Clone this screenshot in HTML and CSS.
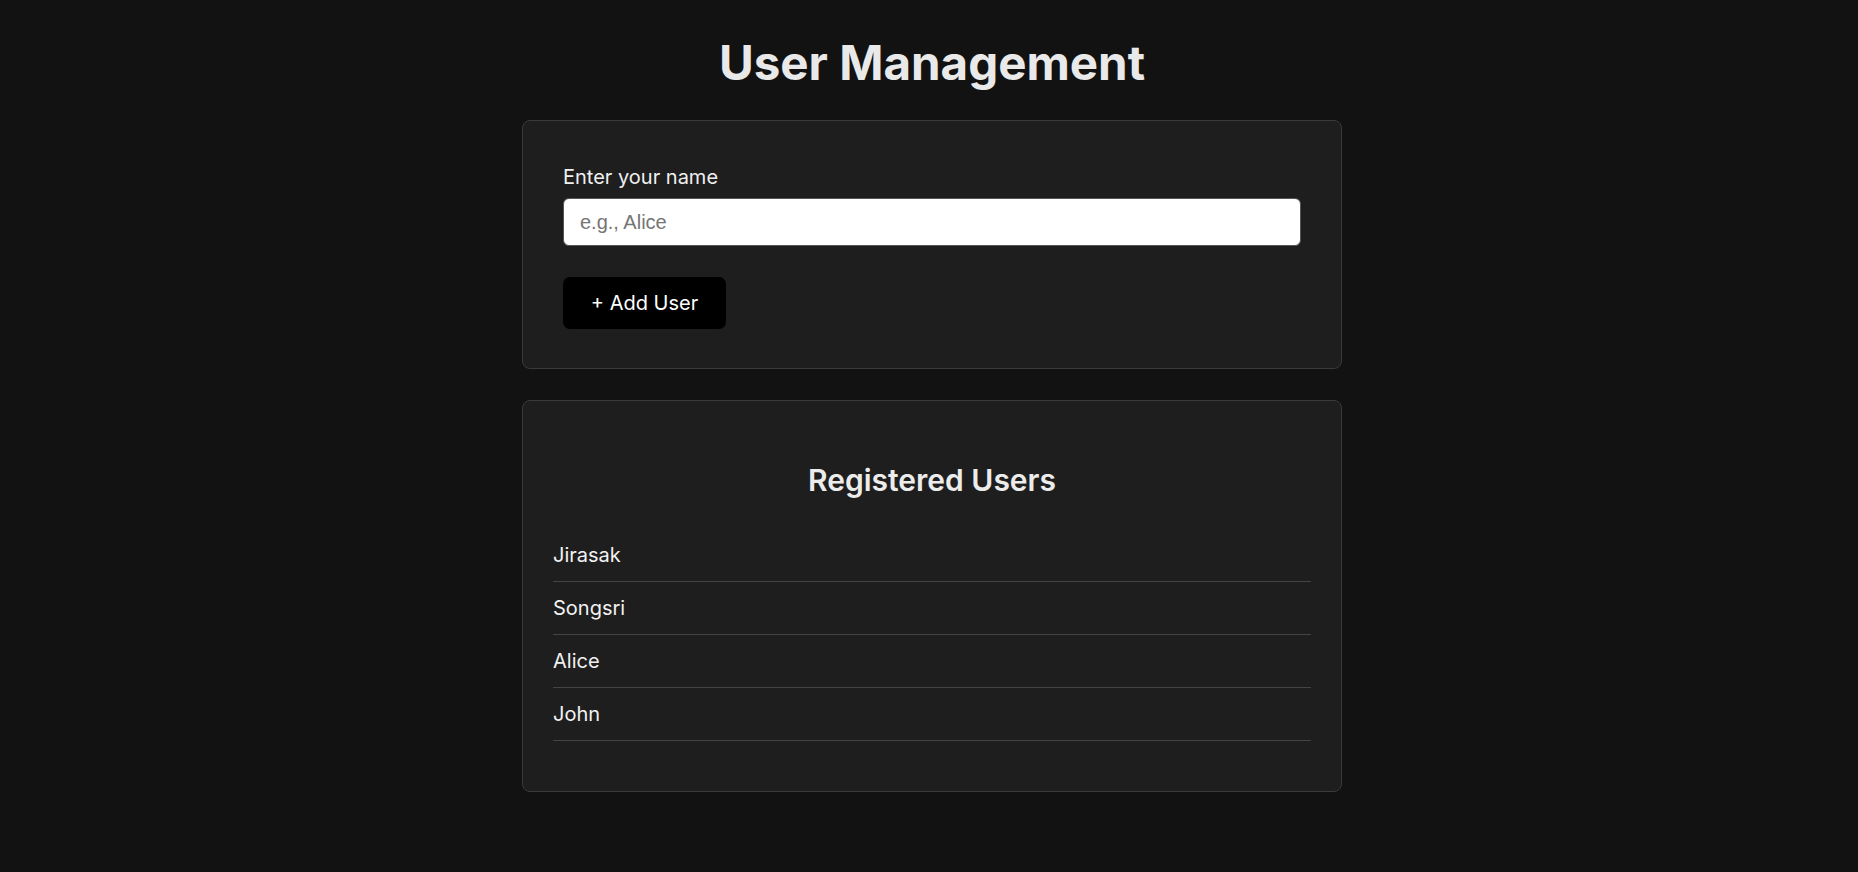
FILE: index.html
```html
<!DOCTYPE html>
<html lang="en">
<head>
<meta charset="utf-8">
<title>User Management</title>
<link rel="stylesheet" href="styles.css">
</head>
<body>
<main class="page">
  <h1 class="title">User Management</h1>
  <section class="card form-card">
    <label class="field-label" for="name">Enter your name</label>
    <input class="field-input" id="name" type="text" placeholder="e.g., Alice">
    <button class="add-btn" type="button">+ Add User</button>
  </section>
  <section class="card list-card">
    <h2 class="list-title">Registered Users</h2>
    <ul class="user-list">
      <li class="user-item">Jirasak</li>
      <li class="user-item">Songsri</li>
      <li class="user-item">Alice</li>
      <li class="user-item">John</li>
    </ul>
  </section>
</main>
</body>
</html>
```

FILE: styles.css
```css
* { box-sizing: border-box; }

html, body {
  margin: 0;
  padding: 0;
  background: #121212;
}

body {
  font-family: Inter, "Noto Sans", sans-serif;
  color: #f2f2f2;
}

.page {
  display: flex;
  flex-direction: column;
  align-items: center;
  padding: 34px 0 40px 6px;
}

.title {
  margin: 0 0 28px;
  font-size: 47.5px;
  font-weight: 700;
  line-height: 58px;
  color: #e9e9e9;
}

.card {
  width: 820px;
  background: #1e1e1e;
  border: 1px solid #3a3a3a;
  border-radius: 8px;
}

.form-card {
  display: flex;
  flex-direction: column;
  align-items: flex-start;
  padding: 40px 40px 39px;
  margin-bottom: 31px;
}

.field-label {
  display: block;
  font-size: 20px;
  line-height: 22px;
  margin: 5px 0 10px;
  color: #f0f0f0;
}

.field-input {
  width: 100%;
  height: 48px;
  padding: 0 16px;
  border: 1px solid #555;
  border-radius: 6px;
  background: #ffffff;
  font-family: "Liberation Sans", Arial, sans-serif;
  font-size: 20px;
  color: #222;
  outline: none;
}

.field-input::placeholder {
  color: #757575;
}

.add-btn {
  margin-top: 31px;
  width: 163px;
  height: 52px;
  border: none;
  border-radius: 7px;
  background: #000;
  color: #fff;
  font-family: Inter, "Noto Sans", sans-serif;
  font-size: 20px;
  padding: 0;
}

.list-card {
  padding: 62px 30px 50px;
}

.list-title {
  margin: 0 0 31px;
  text-align: center;
  font-size: 30px;
  font-weight: 600;
  line-height: 35px;
  color: #ececec;
}

.user-list {
  list-style: none;
  margin: 0;
  padding: 0;
}

.user-item {
  font-size: 20px;
  line-height: 24px;
  padding: 14px 0;
  border-bottom: 1px solid #444;
  color: #f2f2f2;
}
```
